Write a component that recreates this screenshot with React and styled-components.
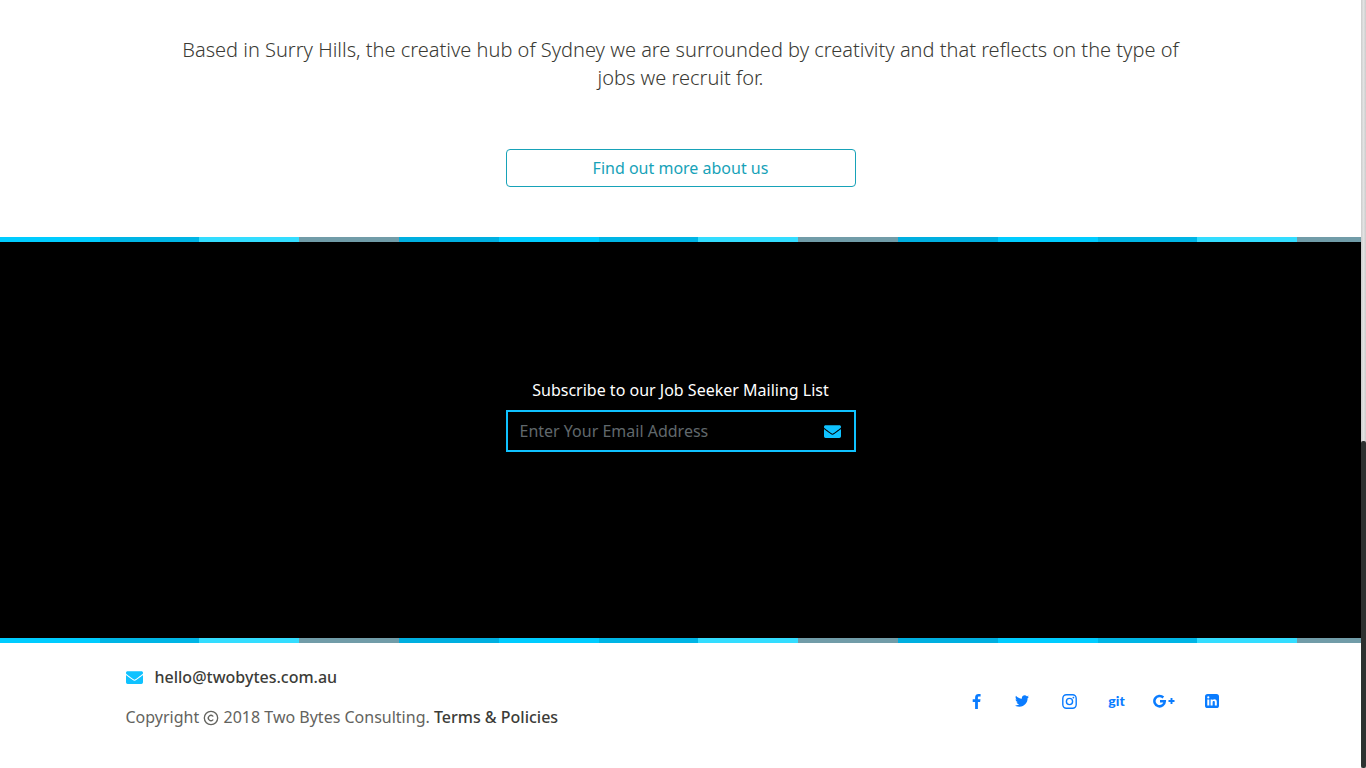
import React from "react";
import styled, { createGlobalStyle } from "styled-components";
import { FaTwitter, FaEnvelope } from "react-icons/fa";
import { Copyright as CopyrightIcon } from "lucide-react";

const GlobalStyle = createGlobalStyle`
  *, *::before, *::after { box-sizing: border-box; }
  body {
    margin: 0;
    background: #fff;
    color: #4a4a44;
    font: 400 16px/28px "Noto Sans", "Open Sans", sans-serif;
  }
`;

const Shell = styled.div`
  display: grid;
  grid-template-columns: minmax(0, 1fr) 5px;
  min-height: 100vh;
`;

const Page = styled.div`
  display: flex;
  flex-direction: column;
`;

const ScrollTrack = styled.div`
  display: flex;
  flex-direction: column;
  justify-content: flex-end;
  background: linear-gradient(90deg, #cbcbcb, #e2e2e2 50%, #cbcbcb);
`;

const ScrollThumb = styled.div`
  height: 327px;
  border-radius: 2px;
  background: #2d3130;
`;

const Intro = styled.section`
  display: flex;
  flex-direction: column;
  align-items: center;
  gap: 57px;
  padding: 36px 15px 50px;
`;

const Lead = styled.p`
  max-width: 1026px;
  margin: 0;
  color: #3a3a34;
  font-size: 20px;
  font-weight: 300;
  line-height: 28px;
  text-align: center;
`;

const AboutButton = styled.button`
  width: 100%;
  max-width: 350px;
  height: 38px;
  padding: 0;
  border: 1px solid #17a2b8;
  border-radius: 4px;
  background: transparent;
  color: #17a2b8;
  font: inherit;
  cursor: pointer;
`;

const Stripes = styled.div`
  height: 5px;
  background: repeating-linear-gradient(
    90deg,
    #0cf 0 100px,
    #00b5e5 100px 199px,
    #3df 199px 299px,
    #719ca8 299px 399px,
    #00afe0 399px 499px
  );
`;

const Subscribe = styled.section`
  display: flex;
  flex-direction: column;
  align-items: center;
  padding: 134px 15px 186px;
  background: #000;
`;

const Form = styled.form`
  display: flex;
  flex-direction: column;
  align-items: center;
  gap: 6px;
  width: 100%;
  max-width: 350px;
`;

const FieldLabel = styled.label`
  color: #fff;
`;

const Field = styled.div`
  display: flex;
  width: 100%;
  height: 42px;
  border: 2px solid #0fc2ff;
`;

const EmailInput = styled.input`
  flex: 1;
  min-width: 0;
  padding: 0 12px;
  border: 0;
  background: transparent;
  color: #fff;
  font: inherit;

  &::placeholder { color: #60686c; opacity: 1; }
`;

const SubmitButton = styled.button`
  display: flex;
  align-items: center;
  padding: 0 13px;
  border: 0;
  background: transparent;
  color: #0fc2ff;
  cursor: pointer;
`;

const Footer = styled.footer`
  display: flex;
  align-items: center;
  justify-content: space-between;
  width: 100%;
  max-width: 1140px;
  margin: 0 auto;
  padding: 20px 15px 36px;
`;

const Contact = styled.div`
  display: flex;
  flex-direction: column;
  gap: 12px;
`;

const MailLink = styled.a`
  display: flex;
  align-items: center;
  gap: 12px;
  color: #3c3c38;
  font-weight: 500;
  text-decoration: none;

  svg { color: #0fc2ff; }
`;

const Copyright = styled.p`
  margin: 0;
  color: #63635e;

  svg { vertical-align: -3px; }
`;

const TermsLink = styled.a`
  color: #3c3c38;
  font-weight: 500;
  text-decoration: none;
`;

const SocialList = styled.nav`
  display: flex;
  align-items: center;
  padding-top: 8px;
`;

const SocialLink = styled.a`
  display: flex;
  align-items: center;
  justify-content: center;
  width: ${({ $width }) => $width || 48}px;
  height: 28px;
  color: #0a7cff;
  text-decoration: none;
`;

const GitWordmark = styled.span`
  font: 900 14px/20px Lato, sans-serif;
`;

const FacebookIcon = () => (
  <svg width="9" height="15" viewBox="0 0 9 15" fill="currentColor" aria-hidden="true">
    <path d="M8.6.1v2.4H7.2c-1.1 0-1.3.5-1.3 1.3v1.5h2.6l-.4 2.6H5.9V15H3.1V7.9H.7V5.3h2.4V3.4C3.1 1.200 4.500 0 6.500 0c1 0 1.800.1 2.100.1z" />
  </svg>
);

const InstagramIcon = () => (
  <svg width="15" height="15" viewBox="0 0 15 15" fill="none" stroke="currentColor" strokeWidth="1.400" aria-hidden="true">
    <rect x=".8" y=".8" width="13.400" height="13.400" rx="3.600" />
    <circle cx="7.500" cy="7.500" r="3.100" />
    <circle cx="11.400" cy="3.600" r=".9" fill="currentColor" stroke="none" />
  </svg>
);

const GooglePlusIcon = () => (
  <svg width="22" height="14" viewBox="0 0 22 14" fill="none" stroke="currentColor" aria-hidden="true">
    <path d="M10.300 3.500A5.200 5.200 0 1 0 11.800 7.300H7" strokeWidth="2.500" />
    <path d="M15.500 7h6M18.500 4v6" strokeWidth="1.900" />
  </svg>
);

const LinkedinIcon = () => (
  <svg width="14" height="14" viewBox="0 0 14 14" aria-hidden="true">
    <rect width="14" height="14" rx="2.600" fill="currentColor" />
    <circle cx="3.300" cy="3.400" r="1.100" fill="#fff" />
    <path
      d="M2.300 5.400h2v6.200h-2zM5.600 5.400h2v.9c.4-.6 1-1 1.900-1 1.500 0 2.300 1 2.300 2.700v3.600h-2V8.300c0-.8-.3-1.300-1-1.300-.8 0-1.200.5-1.200 1.400v3.200h-2z"
      fill="#fff"
    />
  </svg>
);

const socials = [
  { name: "Facebook", icon: <FacebookIcon />, width: 42 },
  { name: "Twitter", icon: <FaTwitter size={14} /> },
  { name: "Instagram", icon: <InstagramIcon /> },
  { name: "Git", icon: <GitWordmark>git</GitWordmark>, width: 46 },
  { name: "Google Plus", icon: <GooglePlusIcon /> },
  { name: "LinkedIn", icon: <LinkedinIcon /> },
];

export default function App() {
  return (
    <Shell>
      <GlobalStyle />
      <Page>
        <Intro>
          <Lead>
            Based in Surry Hills, the creative hub of Sydney we are surrounded by creativity and that
            reflects on the type of jobs we recruit for.
          </Lead>
          <AboutButton type="button">Find out more about us</AboutButton>
        </Intro>
        <Stripes />
        <Subscribe>
          <Form onSubmit={(event) => event.preventDefault()}>
            <FieldLabel htmlFor="email">Subscribe to our Job Seeker Mailing List</FieldLabel>
            <Field>
              <EmailInput id="email" type="email" placeholder="Enter Your Email Address" />
              <SubmitButton type="submit" aria-label="Subscribe">
                <FaEnvelope size={17} />
              </SubmitButton>
            </Field>
          </Form>
        </Subscribe>
        <Stripes />
        <Footer>
          <Contact>
            <MailLink href="mailto:hello@twobytes.com.au">
              <FaEnvelope size={17} />
              hello@twobytes.com.au
            </MailLink>
            <Copyright>
              Copyright <CopyrightIcon size={16} role="img" aria-label="©" /> 2018 Two Bytes Consulting.{" "}
              <TermsLink href="#terms">Terms &amp; Policies</TermsLink>
            </Copyright>
          </Contact>
          <SocialList aria-label="Social media">
            {socials.map(({ name, icon, width }) => (
              <SocialLink key={name} href="#social" aria-label={name} $width={width}>
                {icon}
              </SocialLink>
            ))}
          </SocialList>
        </Footer>
      </Page>
      <ScrollTrack>
        <ScrollThumb />
      </ScrollTrack>
    </Shell>
  );
}
